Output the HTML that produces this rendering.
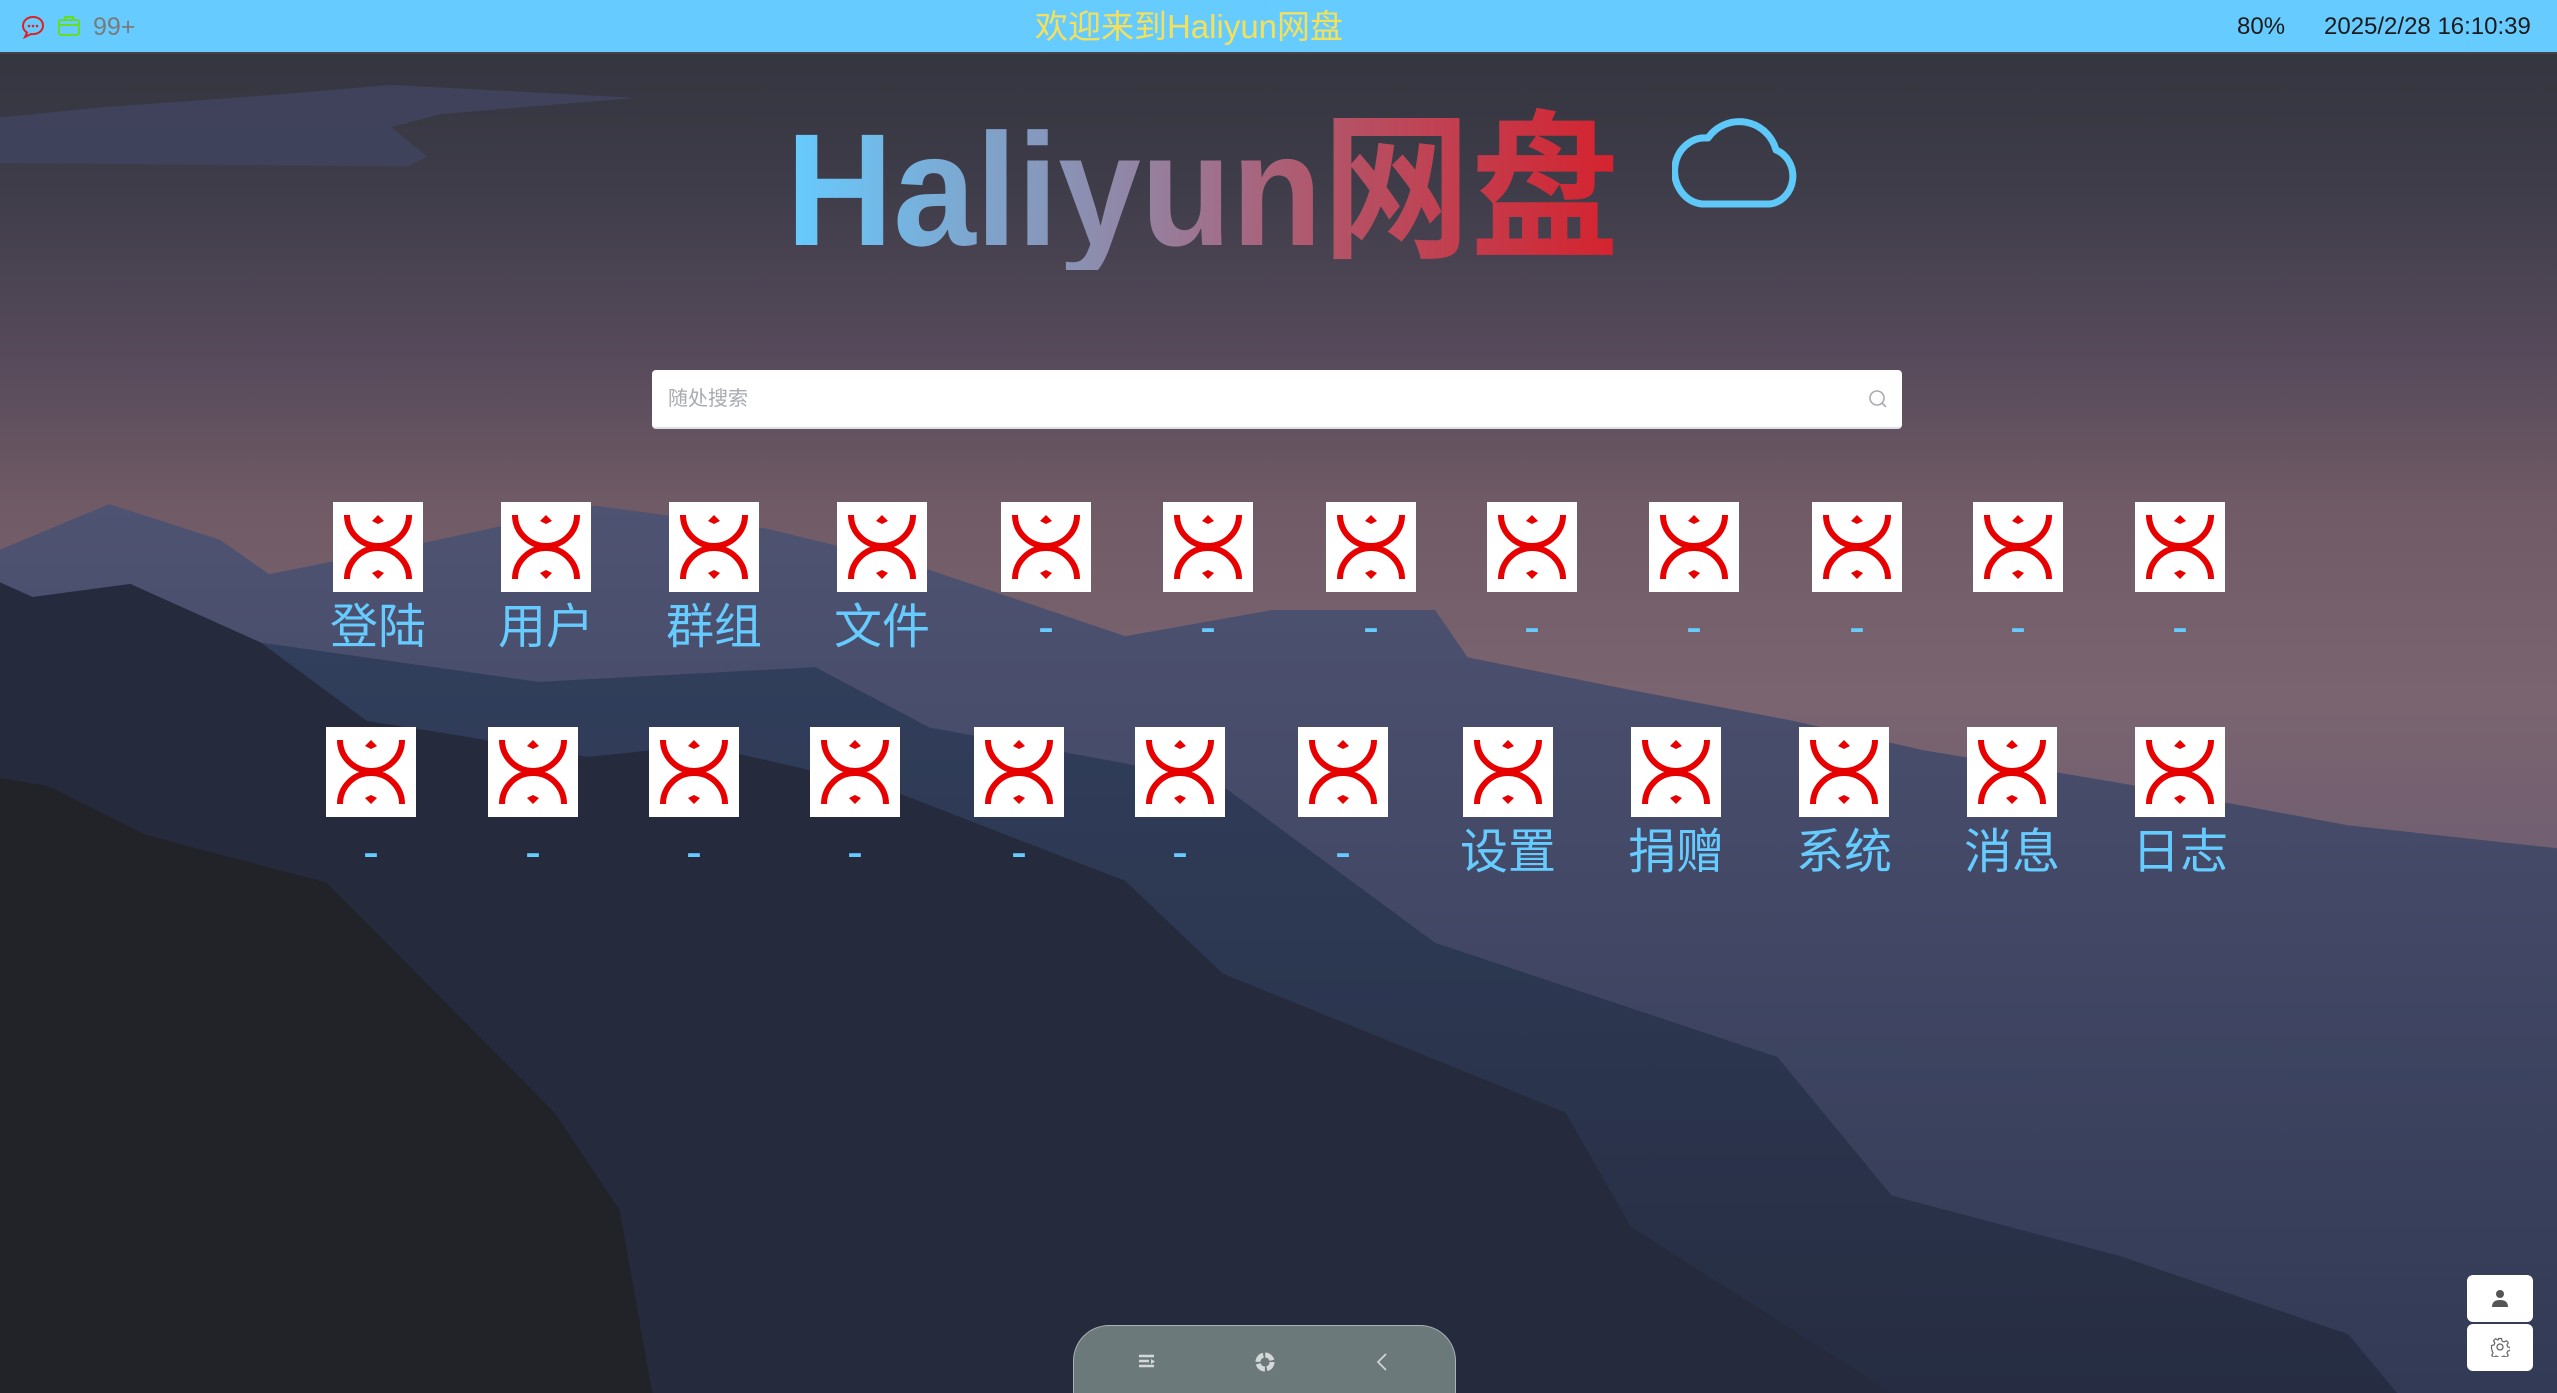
<!DOCTYPE html>
<html><head><meta charset="utf-8">
<style>
*{margin:0;padding:0;box-sizing:border-box}
html,body{width:2557px;height:1393px;overflow:hidden;background:#222328;font-family:"Liberation Sans","Noto Sans CJK SC",sans-serif}
#bg{position:absolute;left:0;top:0;width:2557px;height:1393px}
.bar{position:absolute;left:0;top:0;width:2557px;height:54px;background:#66ccff;border-bottom:2px solid #444}
.t{position:absolute;white-space:nowrap}
.ic{position:absolute;width:90px;height:90px}
.lb{position:absolute;width:200px;text-align:center;font-size:48px;line-height:60px;color:#66ccff;font-family:"Liberation Sans","Noto Sans CJK SC",sans-serif}
.search{position:absolute;left:652px;top:370px;width:1250px;height:59px;background:#fff;border-radius:4px;border-bottom:2px solid #dcdfe6}
.dock{position:absolute;left:1073px;top:1325px;width:383px;height:68px;border-radius:36px 36px 0 0;background:#6b797b;border:1.5px solid #a9b3b5;border-bottom:none;overflow:hidden}
.rb{position:absolute;left:2467px;width:66px;height:47px;background:#fff;border-radius:6px}
</style></head><body>
<svg id="bg" viewBox="0 0 1568 854" preserveAspectRatio="none">
<defs>
<linearGradient id="sky" x1="0" y1="0" x2="0" y2="1">
<stop offset="0" stop-color="#31333d"/>
<stop offset="0.12" stop-color="#3c3b47"/>
<stop offset="0.25" stop-color="#55495a"/>
<stop offset="0.36" stop-color="#6f5a65"/>
<stop offset="0.5" stop-color="#7a6470"/>
<stop offset="0.7" stop-color="#6a5a72"/>
<stop offset="1" stop-color="#5a5070"/>
</linearGradient>
<linearGradient id="la" x1="0" y1="0" x2="0" y2="1"><stop offset="0" stop-color="#4f5372"/><stop offset="1" stop-color="#323a55"/></linearGradient>
<linearGradient id="lb" x1="0" y1="0" x2="0" y2="1"><stop offset="0" stop-color="#32405e"/><stop offset="1" stop-color="#262d42"/></linearGradient>
</defs>
<rect width="1568" height="854" fill="url(#sky)"/>
<polygon points="0,72 60,66 170,58 240,52 390,60 270,70 240,78 262,96 250,102 0,100" fill="#414560" opacity="0.8"/>
<polygon points="0,337 67,309 135,331 165,352 250,335 365,310 470,324 560,346 690,390 780,374 880,374 900,403 1000,423 1100,442 1180,460 1300,480 1440,506 1568,520 1568,854 0,854" fill="url(#la)"/>
<polygon points="0,357 20,366 80,358 160,394 330,418 500,409 570,446 690,468 750,482 880,578 1090,648 1160,733 1300,770 1440,818 1470,854 0,854" fill="url(#lb)"/>
<polygon points="0,357 20,366 80,358 160,394 225,442 270,449 360,464 430,457 540,482 690,540 750,597 960,682 1000,752 1160,854 0,854" fill="#252b3d"/>
<polygon points="0,477 30,482 90,512 200,541 230,571 340,682 380,742 400,854 0,854" fill="#222328"/>
</svg>

<div class="bar"></div>
<svg class="t" style="left:20px;top:14px" width="26" height="26" viewBox="0 0 26 26"><path d="M13 3C7 3 3 7 3 12c0 3 1.5 5 4 6.5L5 23l6-3c.7.1 1.3.1 2 .1 6 0 10-4 10-8.6S19 3 13 3z" fill="none" stroke="#e02020" stroke-width="2"/><circle cx="9" cy="12" r="1.3" fill="#e02020"/><circle cx="13" cy="12" r="1.3" fill="#e02020"/><circle cx="17" cy="12" r="1.3" fill="#e02020"/></svg>
<svg class="t" style="left:57px;top:14px" width="24" height="24" viewBox="0 0 24 24"><rect x="2" y="6" width="20" height="15" rx="2" fill="none" stroke="#66dd22" stroke-width="2"/><path d="M8 6V3h8v3M2 11h20" fill="none" stroke="#66dd22" stroke-width="2"/></svg>
<div class="t" style="left:93px;top:10px;font-size:25px;color:#7a7a7a;line-height:34px">99+</div>
<div class="t" style="left:1014px;top:5px;width:350px;text-align:center;font-size:33px;color:#f5e05a;line-height:44px">欢迎来到Haliyun网盘</div>
<div class="t" style="left:2237px;top:11px;font-size:24px;color:#1a1a1a;line-height:32px">80%</div>
<div class="t" style="left:2324px;top:11px;font-size:24px;color:#1a1a1a;line-height:32px">2025/2/28 16:10:39</div>

<svg class="t" style="left:770px;top:90px" width="880" height="180" viewBox="770 90 880 180">
<defs><linearGradient id="lg" x1="786" y1="0" x2="1619" y2="0" gradientUnits="userSpaceOnUse"><stop offset="0" stop-color="#66ccff"/><stop offset="0.4" stop-color="#9088a8"/><stop offset="0.65" stop-color="#b35468"/><stop offset="1" stop-color="#d6222e"/></linearGradient></defs>
<text x="786" y="245" font-size="160" font-weight="bold" fill="url(#lg)" textLength="833" lengthAdjust="spacingAndGlyphs" font-family="Liberation Sans, Noto Sans CJK SC, sans-serif">Haliyun网盘</text>
</svg>
<svg class="t" style="left:1672px;top:108px" width="130" height="102" viewBox="0 0 130 102"><path d="M30 96H98A26 28 0 0 0 104 42A38 38 0 0 0 36 30A22 24 0 0 0 30 96Z" fill="none" stroke="#5ec8f8" stroke-width="7" stroke-linejoin="round"/></svg>

<div class="search"><div class="t" style="left:16px;top:14px;font-size:20px;color:#a8abb2;line-height:30px">随处搜索</div>
<svg class="t" style="left:1215px;top:18px" width="22" height="22" viewBox="0 0 22 22"><circle cx="10" cy="10" r="7" fill="none" stroke="#a8abb2" stroke-width="1.6"/><path d="M15 15l4 4" stroke="#a8abb2" stroke-width="1.6"/></svg></div>

<svg width="0" height="0" style="position:absolute"><symbol id="x" viewBox="0 0 90 90"><rect width="90" height="90" fill="#fff"/><path d="M14 13A31 31 0 0 0 76 13M14 77A31 31 0 0 1 76 77" fill="none" stroke="#e60000" stroke-width="6"/><path d="M45 13l6 6-6 3-6-3z" fill="#e60000"/><path d="M45 77l6-6-6-3-6 3z" fill="#e60000"/></symbol></svg>

<svg class="ic" style="left:333px;top:502px"><use href="#x"/></svg>
<svg class="ic" style="left:501px;top:502px"><use href="#x"/></svg>
<svg class="ic" style="left:669px;top:502px"><use href="#x"/></svg>
<svg class="ic" style="left:837px;top:502px"><use href="#x"/></svg>
<svg class="ic" style="left:1001px;top:502px"><use href="#x"/></svg>
<svg class="ic" style="left:1163px;top:502px"><use href="#x"/></svg>
<svg class="ic" style="left:1326px;top:502px"><use href="#x"/></svg>
<svg class="ic" style="left:1487px;top:502px"><use href="#x"/></svg>
<svg class="ic" style="left:1649px;top:502px"><use href="#x"/></svg>
<svg class="ic" style="left:1812px;top:502px"><use href="#x"/></svg>
<svg class="ic" style="left:1973px;top:502px"><use href="#x"/></svg>
<svg class="ic" style="left:2135px;top:502px"><use href="#x"/></svg>
<div class="lb" style="left:278px;top:598px">登陆</div>
<div class="lb" style="left:446px;top:598px">用户</div>
<div class="lb" style="left:614px;top:598px">群组</div>
<div class="lb" style="left:782px;top:598px">文件</div>
<div class="lb" style="left:946px;top:598px">-</div>
<div class="lb" style="left:1108px;top:598px">-</div>
<div class="lb" style="left:1271px;top:598px">-</div>
<div class="lb" style="left:1432px;top:598px">-</div>
<div class="lb" style="left:1594px;top:598px">-</div>
<div class="lb" style="left:1757px;top:598px">-</div>
<div class="lb" style="left:1918px;top:598px">-</div>
<div class="lb" style="left:2080px;top:598px">-</div>

<svg class="ic" style="left:326px;top:727px"><use href="#x"/></svg>
<svg class="ic" style="left:488px;top:727px"><use href="#x"/></svg>
<svg class="ic" style="left:649px;top:727px"><use href="#x"/></svg>
<svg class="ic" style="left:810px;top:727px"><use href="#x"/></svg>
<svg class="ic" style="left:974px;top:727px"><use href="#x"/></svg>
<svg class="ic" style="left:1135px;top:727px"><use href="#x"/></svg>
<svg class="ic" style="left:1298px;top:727px"><use href="#x"/></svg>
<svg class="ic" style="left:1463px;top:727px"><use href="#x"/></svg>
<svg class="ic" style="left:1631px;top:727px"><use href="#x"/></svg>
<svg class="ic" style="left:1799px;top:727px"><use href="#x"/></svg>
<svg class="ic" style="left:1967px;top:727px"><use href="#x"/></svg>
<svg class="ic" style="left:2135px;top:727px"><use href="#x"/></svg>
<div class="lb" style="left:271px;top:823px">-</div>
<div class="lb" style="left:433px;top:823px">-</div>
<div class="lb" style="left:594px;top:823px">-</div>
<div class="lb" style="left:755px;top:823px">-</div>
<div class="lb" style="left:919px;top:823px">-</div>
<div class="lb" style="left:1080px;top:823px">-</div>
<div class="lb" style="left:1243px;top:823px">-</div>
<div class="lb" style="left:1408px;top:823px">设置</div>
<div class="lb" style="left:1576px;top:823px">捐赠</div>
<div class="lb" style="left:1744px;top:823px">系统</div>
<div class="lb" style="left:1912px;top:823px">消息</div>
<div class="lb" style="left:2080px;top:823px">日志</div>

<div class="dock">
<svg class="t" style="left:63px;top:27px" width="20" height="18" viewBox="0 0 20 18"><path d="M2 3h15M2 8h10M2 13h15" stroke="#d4d8d8" stroke-width="2.4"/><path d="M14 6l4 2.5-4 2.5z" fill="#d4d8d8"/></svg>
<svg class="t" style="left:180px;top:25px" width="22" height="22" viewBox="0 0 22 22"><circle cx="11" cy="11" r="7" fill="none" stroke="#d4d8d8" stroke-width="5" stroke-dasharray="9 2"/></svg>
<svg class="t" style="left:301px;top:26px" width="14" height="20" viewBox="0 0 14 20"><path d="M11 2L3 10l8 8" fill="none" stroke="#d4d8d8" stroke-width="1.6"/></svg>
</div>

<div class="rb" style="top:1275px"><svg class="t" style="left:24px;top:14px" width="18" height="18" viewBox="0 0 18 18"><circle cx="9" cy="5" r="4" fill="#555"/><path d="M1 18c0-5 3-7 8-7s8 2 8 7z" fill="#555"/></svg></div>
<div class="rb" style="top:1324px"><svg class="t" style="left:23px;top:13px" width="20" height="20" viewBox="0 0 20 20"><path d="M8.5 1.5h3l.5 2.5 2 1 2.3-1.3 2 2-1.3 2.3.8 2 2.5.5v3l-2.5.5-.8 2 1.3 2.3-2 2-2.3-1.3-2 .8-.5 2.5h-3l-.5-2.5-2-.8-2.3 1.3-2-2 1.3-2.3-.8-2L1.5 11.5v-3L4 8l.8-2-1.3-2.3 2-2L7.8 3l.7-.5z" fill="none" stroke="#666" stroke-width="1.2"/><circle cx="10" cy="10" r="3" fill="none" stroke="#666" stroke-width="1.3"/></svg></div>
</body></html>
